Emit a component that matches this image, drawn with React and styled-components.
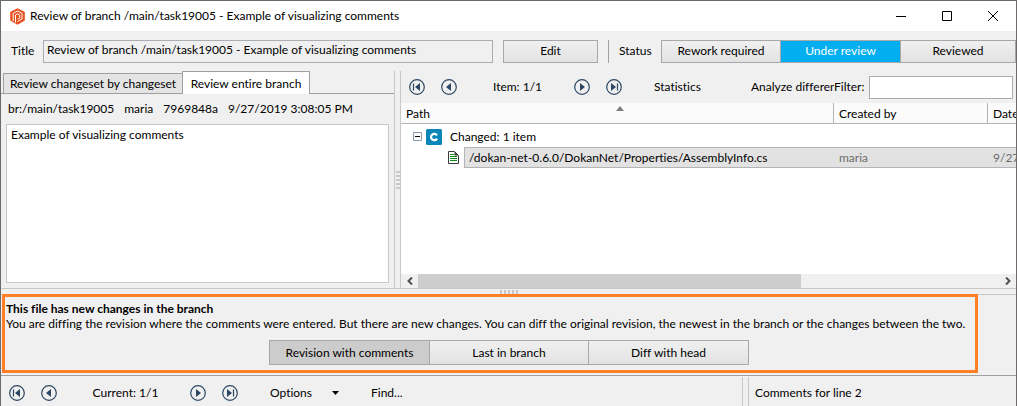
import React from "react";
import styled, { createGlobalStyle, css } from "styled-components";

const LINE = "#a0a0a0";
const SOFT = "#c8c8c8";

const Global = createGlobalStyle`
  * { box-sizing: border-box; }
  body {
    margin: 0;
    background: #f0f0f0;
    color: #000;
    font: 12px/16px Lato, "Open Sans", sans-serif;
    font-variant-ligatures: none;
  }
  button, input, textarea { font: inherit; color: inherit; margin: 0; border-radius: 0; outline: none; }
  h1, h2, p { margin: 0; font: inherit; }
`;

const Window = styled.div`
  display: flex;
  flex-direction: column;
  min-height: 100vh;
  border: 1px solid #6e6a6c;
  border-bottom: 0;
  overflow: hidden;
  white-space: nowrap;
`;

const TitleBar = styled.header`
  display: flex;
  align-items: center;
  height: 30px;
  padding-left: 8px;
  gap: 4px;
  background: #fff;
`;

const WindowTitle = styled.h1`
  flex: 1;
`;

const CaptionButton = styled.button`
  display: flex;
  align-items: center;
  justify-content: center;
  width: 46px;
  height: 28px;
  padding: 0;
  border: 0;
  background: transparent;
`;

const ReviewBar = styled.div`
  display: flex;
  align-items: center;
  height: 40px;
  padding-left: 10px;
`;

const TitleField = styled.label`
  flex: 1;
  display: flex;
  align-items: center;
`;

const TitleLabel = styled.span`
  width: 32px;
`;

const Input = styled.input`
  flex: 1;
  min-width: 0;
  height: 23px;
  padding: 0 3px 3px;
  border: 1px solid #abadb3;
  background: ${(p) => (p.readOnly ? "#f0f0f0" : "#fff")};
`;

const Button = styled.button`
  width: ${(p) => p.$width}px;
  height: ${(p) => p.$height || 23}px;
  padding: 0;
  border: 1px solid #a8a8a8;
  background: linear-gradient(#f0f0f0, #e2e2e2);
  ${(p) => p.$tone === "active" && css`background: #02aef0; color: #fff;`}
  ${(p) => p.$tone === "pressed" && css`background: #cccccc;`}
`;

const EditButton = styled(Button)`
  margin: 0 10px;
`;

const StatusGroup = styled.div`
  display: flex;
  align-items: center;
  height: 23px;
  padding-left: 10px;
  border-left: 1px solid ${LINE};
`;

const StatusLabel = styled.span`
  width: 42px;
`;

const Segments = styled.div`
  display: flex;
  & > button + button { margin-left: -1px; }
`;

const Split = styled.main`
  flex: 1;
  display: flex;
  min-height: 218px;
  border-bottom: 1px solid ${SOFT};
`;

const SidePane = styled.section`
  flex: 0 0 393px;
  display: flex;
  flex-direction: column;
`;

const Tabs = styled.div`
  display: flex;
  align-items: flex-end;
  height: 23px;
  padding-left: 2px;
  border-bottom: 1px solid ${LINE};
`;

const Tab = styled.button`
  height: ${(p) => (p.$active ? 23 : 20)}px;
  width: ${(p) => (p.$active ? 128 : 179)}px;
  margin-bottom: ${(p) => (p.$active ? -1 : 0)}px;
  padding: ${(p) => (p.$active ? 2 : 0)}px 0 0;
  border: 1px solid ${LINE};
  border-bottom: 0;
  border-right-width: ${(p) => (p.$active ? 1 : 0)}px;
  background: ${(p) => (p.$active ? "#fff" : "#e4e4e4")};
`;

const BranchInfo = styled.div`
  display: flex;
  gap: 10px;
  padding: 7px;
`;

const Comment = styled.textarea`
  flex: 1;
  display: block;
  margin: 0 5px 5px;
  padding: 2px 4px;
  border: 1px solid ${SOFT};
  background: #fff;
  resize: none;
`;

const Splitter = styled.div`
  flex: none;
  display: flex;
  align-items: center;
  justify-content: center;
  ${(p) => p.$vertical
    ? css`
        width: 7px;
        padding-left: 1px;
        border: solid ${SOFT};
        border-width: 0 1px;
      `
    : css`
        height: 5px;
        padding-top: 1px;
      `}
`;

const Grip = styled.div`
  width: ${(p) => (p.$vertical ? 4 : 18)}px;
  height: ${(p) => (p.$vertical ? 18 : 4)}px;
  background: repeating-linear-gradient(
    ${(p) => (p.$vertical ? "to bottom" : "to right")},
    ${SOFT} 0 2px, transparent 2px 4px
  );
`;

const ItemsPane = styled.section`
  flex: 1;
  min-width: 0;
  display: flex;
  flex-direction: column;
`;

const Toolbar = styled.div`
  display: flex;
  align-items: center;
  height: 32px;
  padding-left: 8px;
`;

const Pager = styled.div`
  display: flex;
  align-items: center;
  gap: 16px;
`;

const IconButton = styled.button`
  display: flex;
  width: 16px;
  height: 16px;
  padding: 0;
  border: 0;
  background: transparent;
`;

const Position = styled.span`
  width: ${(p) => p.$width}px;
  padding-left: 4px;
  text-align: center;
`;

const FlatButton = styled.button`
  flex: none;
  display: flex;
  align-items: center;
  gap: 20px;
  padding: 0;
  border: 0;
  background: transparent;
  margin-left: 32px;
`;

const ClippedButton = styled(FlatButton)`
  flex: 0 1 83px;
  min-width: 0;
  overflow: hidden;
  margin-left: auto;
`;

const Filter = styled.label`
  display: flex;
  align-items: center;
  justify-content: space-between;
  width: 182px;
  padding-right: 3px;
`;

const FilterInput = styled(Input)`
  flex: 0 0 144px;
`;

const TableArea = styled.div`
  flex: 1;
  background: #fff;
  overflow: hidden;
`;

const Table = styled.table`
  width: 100%;
  border-collapse: separate;
  border-spacing: 0;
  table-layout: fixed;
`;

const HeadCell = styled.th`
  width: ${(p) => p.$width || "auto"};
  height: 21px;
  padding: 2px 0 0 5px;
  text-align: left;
  font-weight: 400;
  overflow: hidden;
  background: #fbfbfb;
  border-bottom: 1px solid #b4b4b4;
  & + & { border-left: 1px solid #b4b4b4; }
`;

const HeadContent = styled.div`
  display: grid;
  grid-template-columns: 1fr auto 1fr;
`;

const SortMark = styled.svg`
  display: block;
`;

const GroupCell = styled.td`
  height: 23px;
  padding: 2px 0 0 12px;
`;

const FileCell = styled.td`
  height: 21px;
  padding: 0 0 0 47px;
`;

const Inline = styled.div`
  display: flex;
  align-items: center;
  gap: ${(p) => p.$gap}px;
`;

const selected = css`
  height: 21px;
  border: solid #b4b4b4;
  border-width: 1px 0;
  background: #e2e2e2;
`;

const FilePath = styled.div`
  ${selected}
  flex: 1;
  border-left-width: 1px;
  padding: 2px 4px;
`;

const MetaCell = styled.td`
  ${selected}
  padding: 0 6px;
  color: #6d6d6d;
  overflow: hidden;
`;

const ScrollBar = styled.div`
  display: flex;
  align-items: center;
  height: 14px;
  background: #f0f0f0;
`;

const ScrollArrow = styled.button`
  display: flex;
  align-items: center;
  justify-content: center;
  width: 17px;
  height: 14px;
  padding: 0;
  border: 0;
  background: transparent;
`;

const ScrollTrack = styled.div`
  flex: 1;
  height: 14px;
`;

const ScrollThumb = styled.div`
  width: 66%;
  height: 14px;
  background: #cdcdcd;
`;

const NoticeArea = styled.section`
  border-top: 1px solid ${SOFT};
  border-bottom: 1px solid ${LINE};
  padding: 0 38px 2px 1px;
`;

const Notice = styled.div`
  margin-top: -1px;
  padding: 4px 1px 5px;
  border: 3px solid #ff7f27;
  line-height: 15px;
`;

const NoticeTitle = styled.h2`
  font-weight: 700;
`;

const NoticeActions = styled.div`
  display: flex;
  justify-content: center;
  padding: 9px 0 0 38px;
`;

const BottomBar = styled.footer`
  display: flex;
  height: 30px;
`;

const DiffTools = styled(Toolbar)`
  flex: 1;
  height: 34px;
`;

const CommentsTitle = styled.div`
  width: 267px;
  padding: 9px 6px;
`;

const BottomSplit = styled(Splitter)`
  margin-top: 1px;
`;

const NAVY = "#2c4763";
const PageIcon = ({ kind }) => {
  const back = kind === "first" || kind === "prev";
  const edge = kind === "first" || kind === "last";
  return (
    <svg width="16" height="16" viewBox="0 0 16 16" fill="none">
      <circle cx="8" cy="8" r="7.3" stroke={NAVY} strokeWidth="1.2" />
      <g transform={back ? undefined : "translate(16 0) scale(-1 1)"}>
        <path d={edge ? "M11 4v8L6 8z" : "M10 4v8L5 8z"} fill={NAVY} />
        {edge && <path d="M4.500 4.500v7" stroke={NAVY} strokeWidth="1.2" />}
      </g>
    </svg>
  );
};

const names = { first: "First", prev: "Previous", next: "Next", last: "Last" };
const Nav = ({ kind }) => (
  <IconButton aria-label={names[kind]}>
    <PageIcon kind={kind} />
  </IconButton>
);

const PagerControls = ({ text, width }) => (
  <Pager>
    <Nav kind="first" />
    <Nav kind="prev" />
    <Position $width={width}>{text}</Position>
    <Nav kind="next" />
    <Nav kind="last" />
  </Pager>
);

const Logo = () => (
  <svg width="17" height="17" viewBox="0 0 17 17">
    <path d="M8.5 0.3 15.8 4v8.6L8.5 16.7 1.2 12.6V4z" fill="#e9501f" />
    <path d="M4.200 13V5.400L8.500 3l4.500 2.400v5.500L8.500 13.500" fill="none" stroke="#fff" strokeWidth="1" />
    <path d="M6.500 14.500V7l2-1.200 2.200 1.200v2.800l-2.200 1.300" fill="none" stroke="#fff" strokeWidth="1" />
  </svg>
);

const FileIcon = () => (
  <svg width="11" height="13" viewBox="0 0 11 13" fill="none">
    <path d="M.5.500h6L10.500 4.500V12.500H.5z" fill="#fff" stroke="#3c3c3c" strokeWidth="1" />
    <path d="M6.500.5v4h4z" fill="#3c3c3c" />
    <path d="M2 3.500h4M2 5.500h7M2 7.500h7M2 9.500h7" stroke="#128a18" strokeWidth="1" shapeRendering="crispEdges" />
  </svg>
);

export default function App() {
  return (
    <>
      <Global />
      <Window>
        <TitleBar>
          <Logo />
          <WindowTitle>Review of branch /main/task19005 - Example of visualizing comments</WindowTitle>
          <Inline $gap={0}>
            <CaptionButton aria-label="Minimize">
              <svg width="10" height="10" stroke="#000"><path d="M0 5.5h10" /></svg>
            </CaptionButton>
            <CaptionButton aria-label="Maximize">
              <svg width="10" height="10" stroke="#000" fill="none"><path d="M.5.5h9v9h-9z" /></svg>
            </CaptionButton>
            <CaptionButton aria-label="Close">
              <svg width="10" height="10" stroke="#000"><path d="M0 0l10 10M10 0L0 10" /></svg>
            </CaptionButton>
          </Inline>
        </TitleBar>

        <ReviewBar>
          <TitleField>
            <TitleLabel>Title</TitleLabel>
            <Input readOnly value="Review of branch /main/task19005 - Example of visualizing comments" />
          </TitleField>
          <EditButton $width={95}>Edit</EditButton>
          <StatusGroup>
            <StatusLabel>Status</StatusLabel>
            <Segments>
              <Button $width={120}>Rework required</Button>
              <Button $width={121} $tone="active">Under review</Button>
              <Button $width={116}>Reviewed</Button>
            </Segments>
          </StatusGroup>
        </ReviewBar>

        <Split>
          <SidePane>
            <Tabs role="tablist">
              <Tab role="tab" aria-selected="false">Review changeset by changeset</Tab>
              <Tab role="tab" aria-selected="true" $active>Review entire branch</Tab>
            </Tabs>
            <BranchInfo>
              <span>br:/main/task19005</span>
              <span>maria</span>
              <span>7969848a</span>
              <span>9/27/2019 3:08:05 PM</span>
            </BranchInfo>
            <Comment aria-label="Branch comment" defaultValue="Example of visualizing comments" />
          </SidePane>
          <Splitter $vertical><Grip $vertical /></Splitter>
          <ItemsPane>
            <Toolbar>
              <PagerControls text="Item: 1/1" width={85} />
              <FlatButton>Statistics</FlatButton>
              <ClippedButton>Analyze differences</ClippedButton>
              <Filter>
                Filter:
                <FilterInput />
              </Filter>
            </Toolbar>
            <TableArea>
              <Table>
                <thead>
                  <tr>
                    <HeadCell>
                      <HeadContent>
                        Path
                        <SortMark width="8" height="5"><path d="M4 0l4 5H0z" fill="#808080" /></SortMark>
                      </HeadContent>
                    </HeadCell>
                    <HeadCell $width="154px">Created by</HeadCell>
                    <HeadCell $width="29px">Date</HeadCell>
                  </tr>
                </thead>
                <tbody>
                  <tr>
                    <GroupCell colSpan={3}>
                      <Inline $gap={8}>
                        <Inline $gap={4}>
                          <svg width="9" height="9" fill="none">
                            <path d="M.5.5h8v8h-8z" stroke="#8a9bb0" />
                            <path d="M2 4.5h5" stroke="#000" />
                          </svg>
                          <svg width="16" height="16" fill="none">
                            <rect width="16" height="16" rx="1.5" fill="#0a86b8" />
                            <path d="M11 6.400A3.200 3.200 0 1 0 11 9.600" stroke="#fff" strokeWidth="2.200" />
                          </svg>
                        </Inline>
                        Changed: 1 item
                      </Inline>
                    </GroupCell>
                  </tr>
                  <tr>
                    <FileCell>
                      <Inline $gap={5}>
                        <FileIcon />
                        <FilePath>/dokan-net-0.6.0/DokanNet/Properties/AssemblyInfo.cs</FilePath>
                      </Inline>
                    </FileCell>
                    <MetaCell>maria</MetaCell>
                    <MetaCell>9/27/2019</MetaCell>
                  </tr>
                </tbody>
              </Table>
            </TableArea>
            <ScrollBar>
              <ScrollArrow aria-label="Scroll left">
                <svg width="6" height="8" fill="none" stroke="#505050" strokeWidth="2"><path d="M5 .5L1.5 4 5 7.5" /></svg>
              </ScrollArrow>
              <ScrollTrack><ScrollThumb /></ScrollTrack>
              <ScrollArrow aria-label="Scroll right">
                <svg width="6" height="8" fill="none" stroke="#505050" strokeWidth="2"><path d="M1 .5L4.5 4 1 7.5" /></svg>
              </ScrollArrow>
            </ScrollBar>
          </ItemsPane>
        </Split>

        <Splitter><Grip /></Splitter>

        <NoticeArea>
          <Notice>
            <NoticeTitle>This file has new changes in the branch</NoticeTitle>
            <p>
              You are diffing the revision where the comments were entered. But there are new changes. You can diff
              the original revision, the newest in the branch or the changes between the two.
            </p>
            <NoticeActions>
              <Segments>
                <Button $width={161} $height={25} $tone="pressed">Revision with comments</Button>
                <Button $width={160} $height={25}>Last in branch</Button>
                <Button $width={161} $height={25}>Diff with head</Button>
              </Segments>
            </NoticeActions>
          </Notice>
        </NoticeArea>

        <BottomBar>
          <DiffTools>
            <PagerControls text="Current: 1/1" width={101} />
            <FlatButton>
              Options
              <svg width="7" height="4"><path d="M0 0h7L3.500 4z" fill="#000" /></svg>
            </FlatButton>
            <FlatButton>Find...</FlatButton>
          </DiffTools>
          <BottomSplit $vertical />
          <CommentsTitle>Comments for line 2</CommentsTitle>
        </BottomBar>
      </Window>
    </>
  );
}
